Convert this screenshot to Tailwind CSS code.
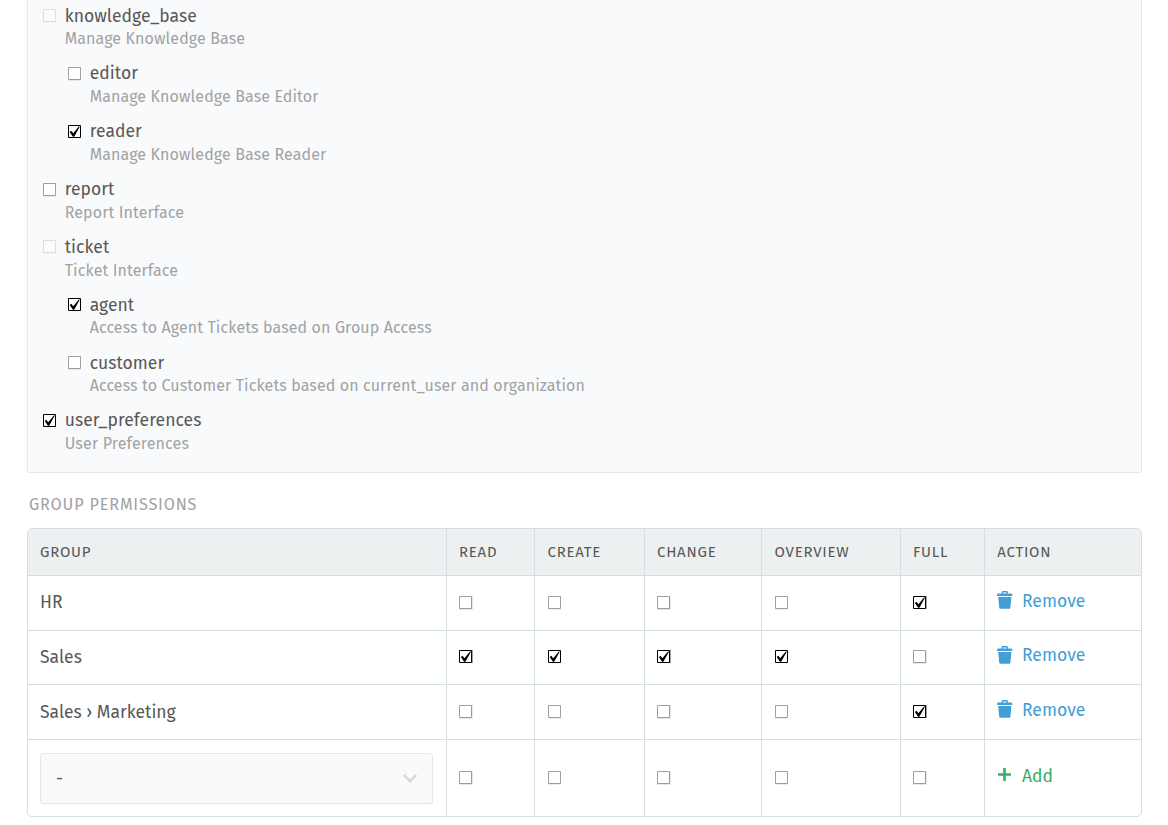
<!DOCTYPE html>
<html lang="en">
<head>
<meta charset="utf-8">
<title>Role permissions</title>
<script src="https://cdn.jsdelivr.net/npm/@tailwindcss/browser@4"></script>
</head>
<body class="h-[825px] overflow-hidden bg-white font-['Fira_Sans','Noto_Sans',sans-serif] text-[17.5px] leading-[23px] tracking-[0.05px] text-[#585856]">
<svg class="hidden">
  <symbol id="off" viewBox="0 0 14 14"><path d="M.5.5h12v12H.5z" fill="#fff" stroke="#a0a0a0"/><path d="M0 13.25h13" stroke="#000" stroke-opacity=".2" stroke-width=".5"/></symbol>
  <symbol id="on" viewBox="0 0 14 14"><path d="M.5.5h12v12H.5z" fill="#fff" stroke="#000"/><path d="M1.700 7 3.300 5.800 5.200 8.200 11 1.300l.7.5L6.200 11.700H4.900z" fill="#000"/></symbol>
  <symbol id="off-wide" viewBox="0 0 14 14"><path d="M.5.5h12v12H.5z" fill="#fff" stroke="#a0a0a0"/><path d="M0 13.25h13.250V0" fill="none" stroke="#000" stroke-opacity=".25" stroke-width=".5"/></symbol>
  <symbol id="on-wide" viewBox="0 0 14 14"><path d="M.5.5h12v12H.5z" fill="#fff" stroke="#000"/><path d="M13.250 0v13" stroke="#000" stroke-width=".5"/><path d="M1.900 7 3.500 5.800 5.400 8.200 11.200 1.300l.7.5L6.400 11.700H5.100z" fill="#000"/></symbol>
  <symbol id="trash" viewBox="0 0 16 19"><path d="M4.700 2.400V1Q4.700.1 5.600.1h4.300q.9 0 .9.900V2.400h3.300q1 0 1.200 1V5H.1V3.400q.2-1 1.200-1zM6 2.400h3.500V1.400H6zM1.200 6h13.200l-1 10.600q-.1 1.200-1.200 1.200H3.400q-1.100 0-1.200-1.200z"/></symbol>
</svg>
<main class="flex flex-col pl-[27px] pr-[26px]">
  <section class="flex h-[473px] flex-col rounded-b-[3px] border border-t-0 border-[#e6e6e6] bg-[#f9fafc] pl-[15px] pt-[4.6px]">
    <div class="flex h-[57.83px] shrink-0 gap-[7.7px]"><svg class="mt-[4.5px] size-[14px] opacity-30"><use href="#off"/></svg><div><div class="h-[22.6px]">knowledge_base</div><div class="text-[16px] tracking-[0.11px] text-[#a1a2a3]">Manage Knowledge Base</div></div></div>
    <div class="ml-[25px] flex h-[57.83px] shrink-0 gap-[7.7px]"><svg class="mt-[4.5px] size-[14px]"><use href="#off"/></svg><div><div class="h-[22.6px]">editor</div><div class="text-[16px] tracking-[0.11px] text-[#a1a2a3]">Manage Knowledge Base Editor</div></div></div>
    <div class="ml-[25px] flex h-[57.83px] shrink-0 gap-[7.7px]"><svg class="mt-[4.5px] size-[14px]"><use href="#on"/></svg><div><div class="h-[22.6px]">reader</div><div class="text-[16px] tracking-[0.11px] text-[#a1a2a3]">Manage Knowledge Base Reader</div></div></div>
    <div class="flex h-[57.83px] shrink-0 gap-[7.7px]"><svg class="mt-[4.5px] size-[14px]"><use href="#off"/></svg><div><div class="h-[22.6px]">report</div><div class="text-[16px] tracking-[0.12px] text-[#a1a2a3]">Report Interface</div></div></div>
    <div class="flex h-[57.83px] shrink-0 gap-[7.7px]"><svg class="mt-[4.5px] size-[14px] opacity-30"><use href="#off"/></svg><div><div class="h-[22.6px]">ticket</div><div class="text-[16px] tracking-[0.12px] text-[#a1a2a3]">Ticket Interface</div></div></div>
    <div class="ml-[25px] flex h-[57.83px] shrink-0 gap-[7.7px]"><svg class="mt-[4.5px] size-[14px]"><use href="#on"/></svg><div><div class="h-[22.6px]">agent</div><div class="text-[16px] tracking-[0.11px] text-[#a1a2a3]">Access to Agent Tickets based on Group Access</div></div></div>
    <div class="ml-[25px] flex h-[57.83px] shrink-0 gap-[7.7px]"><svg class="mt-[4.5px] size-[14px]"><use href="#off"/></svg><div><div class="h-[22.6px]">customer</div><div class="text-[16px] tracking-[0.11px] text-[#a1a2a3]">Access to Customer Tickets based on current_user and organization</div></div></div>
    <div class="flex h-[57.83px] shrink-0 gap-[7.7px]"><svg class="mt-[4.5px] size-[14px]"><use href="#on"/></svg><div><div class="h-[22.6px] tracking-[0.08px]">user_preferences</div><div class="text-[16px] tracking-[0.17px] text-[#a1a2a3]">User Preferences</div></div></div>
  </section>

  <h2 class="mt-[20px] h-[35px] pl-[2px] text-[16.2px] tracking-[0.84px] text-[#a1a2a3]">GROUP PERMISSIONS</h2>

  <div class="overflow-hidden rounded-[5px] border border-[#d4dee2]">
    <div class="grid h-[47px] grid-cols-[419px_88px_110px_117px_139px_84px_1fr] divide-x divide-[#d4dee2] border-b border-[#d4dee2] bg-[#ecf0f1] text-[15px] leading-[47px] tracking-[0.75px]">
      <div class="relative pl-[12px] after:absolute after:right-0 after:-bottom-px after:size-px after:bg-white">GROUP</div>
      <div class="pl-[12px]">READ</div>
      <div class="relative pl-[12.500px] after:absolute after:right-0 after:-bottom-px after:size-px after:bg-white">CREATE</div>
      <div class="pl-[12px]">CHANGE</div>
      <div class="relative pl-[12.500px] after:absolute after:right-0 after:-bottom-px after:size-px after:bg-white">OVERVIEW</div>
      <div class="pl-[12px]">FULL</div>
      <div class="pl-[12.200px]">ACTION</div>
    </div>
    <div class="grid h-[55px] grid-cols-[419px_88px_110px_117px_139px_84px_1fr] divide-x divide-[#d4dee2] border-b border-[#d4dee2]">
      <div class="relative pl-[12px] pt-[15px] after:absolute after:right-0 after:-bottom-px after:size-px after:bg-white">HR</div>
      <div class="pl-[12px] pt-[20px]"><svg class="size-[14px]"><use href="#off-wide"/></svg></div>
      <div class="relative pl-[13px] pt-[20px] after:absolute after:right-0 after:-bottom-px after:size-px after:bg-white"><svg class="size-[14px]"><use href="#off"/></svg></div>
      <div class="pl-[12px] pt-[20px]"><svg class="size-[14px]"><use href="#off-wide"/></svg></div>
      <div class="relative pl-[13px] pt-[20px] after:absolute after:right-0 after:-bottom-px after:size-px after:bg-white"><svg class="size-[14px]"><use href="#off"/></svg></div>
      <div class="pl-[12px] pt-[20px]"><svg class="size-[14px]"><use href="#on-wide"/></svg></div>
      <div class="flex gap-[9px] pl-[12px] pt-[14px] text-[#429ed7]"><svg class="mt-px h-[19px] w-[16px] fill-current"><use href="#trash"/></svg>Remove</div>
    </div>
    <div class="grid h-[54px] grid-cols-[419px_88px_110px_117px_139px_84px_1fr] divide-x divide-[#d4dee2] border-b border-[#d4dee2]">
      <div class="relative pl-[12px] pt-[15px] after:absolute after:right-0 after:-bottom-px after:size-px after:bg-white">Sales</div>
      <div class="pl-[12px] pt-[19px]"><svg class="size-[14px]"><use href="#on-wide"/></svg></div>
      <div class="relative pl-[13px] pt-[19px] after:absolute after:right-0 after:-bottom-px after:size-px after:bg-white"><svg class="size-[14px]"><use href="#on"/></svg></div>
      <div class="pl-[12px] pt-[19px]"><svg class="size-[14px]"><use href="#on-wide"/></svg></div>
      <div class="relative pl-[13px] pt-[19px] after:absolute after:right-0 after:-bottom-px after:size-px after:bg-white"><svg class="size-[14px]"><use href="#on"/></svg></div>
      <div class="pl-[12px] pt-[19px]"><svg class="size-[14px]"><use href="#off-wide"/></svg></div>
      <div class="flex gap-[9px] pl-[12px] pt-[13px] text-[#429ed7]"><svg class="mt-[2px] h-[19px] w-[16px] fill-current"><use href="#trash"/></svg>Remove</div>
    </div>
    <div class="grid h-[55px] grid-cols-[419px_88px_110px_117px_139px_84px_1fr] divide-x divide-[#d4dee2] border-b border-[#d4dee2]">
      <div class="relative pl-[12px] pt-[16px] tracking-[0px] after:absolute after:right-0 after:-bottom-px after:size-px after:bg-white">Sales › Marketing</div>
      <div class="pl-[12px] pt-[20px]"><svg class="size-[14px]"><use href="#off-wide"/></svg></div>
      <div class="relative pl-[13px] pt-[20px] after:absolute after:right-0 after:-bottom-px after:size-px after:bg-white"><svg class="size-[14px]"><use href="#off"/></svg></div>
      <div class="pl-[12px] pt-[20px]"><svg class="size-[14px]"><use href="#off-wide"/></svg></div>
      <div class="relative pl-[13px] pt-[20px] after:absolute after:right-0 after:-bottom-px after:size-px after:bg-white"><svg class="size-[14px]"><use href="#off"/></svg></div>
      <div class="pl-[12px] pt-[20px]"><svg class="size-[14px]"><use href="#on-wide"/></svg></div>
      <div class="flex gap-[9px] pl-[12px] pt-[14px] text-[#429ed7]"><svg class="mt-px h-[19px] w-[16px] fill-current"><use href="#trash"/></svg>Remove</div>
    </div>
    <div class="grid h-[76px] grid-cols-[419px_88px_110px_117px_139px_84px_1fr] divide-x divide-[#d4dee2]">
      <div class="pl-[12px] pt-[13px]">
        <div class="flex h-[51px] w-[393px] items-center justify-between rounded-[3px] border border-[#e6e6e6] bg-[#f9fafc] px-[15px]"><span class="pb-px">-</span><svg class="h-[9px] w-[14px]" viewBox="0 0 14 9" fill="none" stroke="#d8d9da" stroke-width="2.600"><path d="M.8 1 7 7.200 13.200 1"/></svg></div>
      </div>
      <div class="pl-[12px] pt-[31px]"><svg class="size-[14px]"><use href="#off-wide"/></svg></div>
      <div class="pl-[13px] pt-[31px]"><svg class="size-[14px]"><use href="#off"/></svg></div>
      <div class="pl-[12px] pt-[31px]"><svg class="size-[14px]"><use href="#off-wide"/></svg></div>
      <div class="pl-[13px] pt-[31px]"><svg class="size-[14px]"><use href="#off"/></svg></div>
      <div class="pl-[12px] pt-[31px]"><svg class="size-[14px]"><use href="#off-wide"/></svg></div>
      <div class="flex gap-[10px] pl-[13px] pt-[25px] text-[#38ad69]"><svg class="mt-[3px] size-[14px]" viewBox="0 0 14 14" stroke="currentColor" stroke-width="2.600"><path d="M6.500 0v13M0 6.500h13"/></svg><span>Add</span></div>
    </div>
  </div>
</main>
</body>
</html>
